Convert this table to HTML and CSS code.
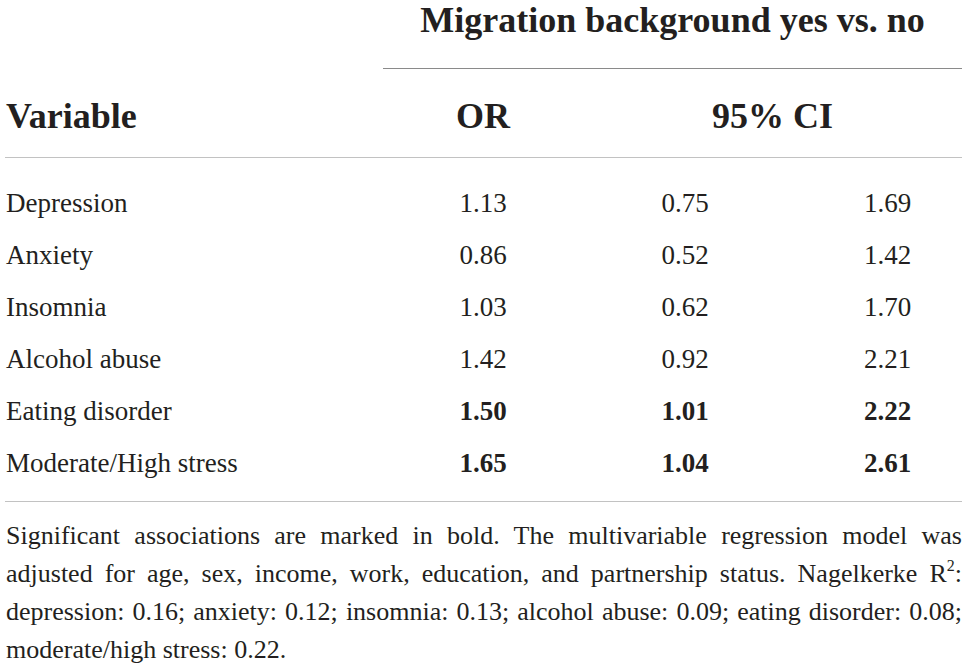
FILE: index.html
```html
<!DOCTYPE html>
<html lang="en">
<head>
<meta charset="utf-8">
<title>Migration background table</title>
<link rel="stylesheet" href="styles.css">
</head>
<body>
<div class="wrap">
  <div class="grid">
    <div class="title">Migration background yes vs. no</div>
    <div class="head head-var">Variable</div>
    <div class="head head-or">OR</div>
    <div class="head head-ci">95% CI</div>

    <div class="body-top"></div>

    <div class="cell var">Depression</div><div class="cell c2">1.13</div><div class="cell c3">0.75</div><div class="cell c4">1.69</div>
    <div class="cell var">Anxiety</div><div class="cell c2">0.86</div><div class="cell c3">0.52</div><div class="cell c4">1.42</div>
    <div class="cell var">Insomnia</div><div class="cell c2">1.03</div><div class="cell c3">0.62</div><div class="cell c4">1.70</div>
    <div class="cell var">Alcohol abuse</div><div class="cell c2">1.42</div><div class="cell c3">0.92</div><div class="cell c4">2.21</div>
    <div class="cell var">Eating disorder</div><div class="cell c2 b">1.50</div><div class="cell c3 b">1.01</div><div class="cell c4 b">2.22</div>
    <div class="cell var">Moderate/High stress</div><div class="cell c2 b">1.65</div><div class="cell c3 b">1.04</div><div class="cell c4 b">2.61</div>

    <div class="body-bottom"></div>
  </div>
  <div class="note">
    <span class="line">Significant associations are marked in bold. The multivariable regression model was</span>
    <span class="line">adjusted for age, sex, income, work, education, and partnership status. Nagelkerke R<sup>2</sup>:</span>
    <span class="line">depression: 0.16; anxiety: 0.12; insomnia: 0.13; alcohol abuse: 0.09; eating disorder: 0.08;</span>
    <span class="line last">moderate/high stress: 0.22.</span>
  </div>
</div>
</body>
</html>
```
FILE: styles.css
```css
html, body {
  margin: 0;
  padding: 0;
  background: #ffffff;
}
body {
  font-family: "Liberation Serif", "Times New Roman", serif;
  color: #231f20;
}
.wrap {
  width: 957px;
  margin-left: 5px;
}
.grid {
  display: grid;
  grid-template-columns: 378px 200px 204px 175px;
}
.title {
  grid-column: 2 / 5;
  font-weight: bold;
  font-size: 36px;
  line-height: 40px;
  text-align: center;
  padding-bottom: 28px;
  border-bottom: 1px solid #8a8a8a;
}
.head {
  font-weight: bold;
  font-size: 36px;
  line-height: 40px;
  padding-top: 27px;
  padding-bottom: 21px;
  border-bottom: 1px solid #c2c2c2;
}
.head-var {
  grid-column: 1;
  padding-left: 1px;
}
.head-or {
  grid-column: 2;
  text-align: center;
}
.head-ci {
  grid-column: 3 / 5;
  text-align: center;
}
.body-top {
  grid-column: 1 / 5;
  height: 19px;
}
.body-bottom {
  grid-column: 1 / 5;
  height: 12px;
  border-bottom: 1px solid #c2c2c2;
}
.cell {
  font-size: 27px;
  line-height: 52px;
}
.var {
  padding-left: 1px;
}
.c2, .c3 {
  text-align: center;
}
.c4 {
  text-align: center;
  padding-left: 26px;
}
.b {
  font-weight: bold;
}
.note {
  margin-top: 15px;
  padding-left: 1px;
  font-size: 26px;
  line-height: 38px;
}
.line {
  display: block;
  text-align: justify;
  text-align-last: justify;
}
.line.last {
  text-align-last: left;
}
.note sup {
  font-size: 16px;
  line-height: 0;
  vertical-align: 11px;
}
```
